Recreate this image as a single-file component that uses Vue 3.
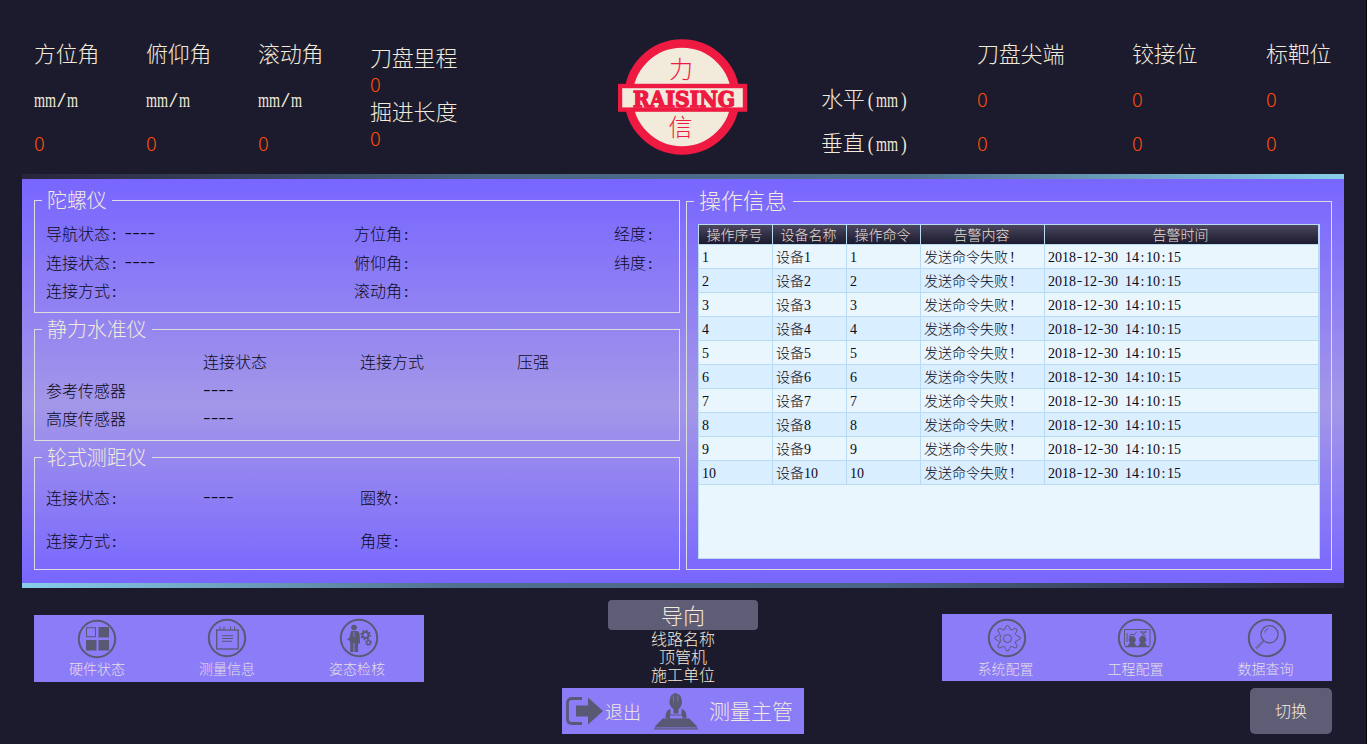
<script setup>
const angles = ['方位角', '俯仰角', '滚动角']
const positions = ['刀盘尖端', '铰接位', '标靶位']
const axes = ['水平', '垂直']
const columns = ['操作序号', '设备名称', '操作命令', '告警内容', '告警时间']
const stamp = '2018-12-30 14:10:15'.split(/([-: ])/)
const rows = Array.from({ length: 10 }, (_, i) => i + 1)
const sepClass = (s) => (s === '-' ? 'sep dash' : s === ':' || s === ' ' ? 'sep' : '')
</script>

<template>
  <div class="screen">
    <header class="top">
      <div class="angles">
        <div v-for="a in angles" :key="a" class="angle">
          <div class="cap">{{ a }}</div>
          <div class="unit"><span class="narrow">mm<i>/</i>m</span></div>
          <div class="val">0</div>
        </div>
      </div>
      <div class="mileage">
        <div class="cap">刀盘里程</div>
        <div class="val">0</div>
        <div class="cap">掘进长度</div>
        <div class="val">0</div>
      </div>
      <svg class="logo" width="130" height="118" viewBox="0 0 130 118">
        <circle cx="64" cy="59" r="53.5" fill="#f2eadb" stroke="#ee1a41" stroke-width="8.5" />
        <rect x="2" y="48" width="125" height="23.600" fill="#f2eadb" stroke="#ee1a41" stroke-width="4.4" />
        <text class="hz" x="63" y="40" text-anchor="middle">力</text>
        <text class="brand" x="15" y="68.500" textLength="102" lengthAdjust="spacingAndGlyphs">RAISING</text>
        <text class="hz" x="62.5" y="98" text-anchor="middle">信</text>
      </svg>
      <div class="offsets">
        <span></span>
        <span v-for="p in positions" :key="p" class="cap">{{ p }}</span>
        <template v-for="x in axes" :key="x">
          <span class="cap">{{ x }}<span class="narrow"><b>(</b>mm<b>)</b></span></span>
          <span v-for="p in positions" :key="p" class="val">0</span>
        </template>
      </div>
    </header>

    <div class="strip"></div>
    <main class="body">
      <div class="left">
        <fieldset class="gyro">
          <legend>陀螺仪</legend>
          <div class="g3">
            <span>导航状态<u>:</u><em class="first">----</em></span><span>方位角<u>:</u></span><span>经度<u>:</u></span>
            <span>连接状态<u>:</u><em class="first">----</em></span><span>俯仰角<u>:</u></span><span>纬度<u>:</u></span>
            <span>连接方式<u>:</u></span><span>滚动角<u>:</u></span><span></span>
          </div>
        </fieldset>
        <fieldset class="level">
          <legend>静力水准仪</legend>
          <div class="g4">
            <span></span><span>连接状态</span><span>连接方式</span><span>压强</span>
            <span>参考传感器</span><span><em>----</em></span><span></span><span></span>
            <span>高度传感器</span><span><em>----</em></span><span></span><span></span>
          </div>
        </fieldset>
        <fieldset class="wheel">
          <legend>轮式测距仪</legend>
          <div class="g4">
            <span>连接状态<u>:</u></span><span><em>----</em></span><span>圈数<u>:</u></span><span></span>
            <span>连接方式<u>:</u></span><span></span><span>角度<u>:</u></span><span></span>
          </div>
        </fieldset>
      </div>
      <fieldset class="info">
        <legend>操作信息</legend>
        <div class="table">
          <div class="tr head"><span v-for="c in columns" :key="c">{{ c }}</span></div>
          <div v-for="n in rows" :key="n" class="tr" :class="{ even: n % 2 === 0 }">
            <span>{{ n }}</span>
            <span>设备{{ n }}</span>
            <span>{{ n }}</span>
            <span>发送命令失败<s>!</s></span>
            <span class="time"><span v-for="(s, i) in stamp" :key="i" :class="sepClass(s)">{{ s }}</span></span>
          </div>
        </div>
      </fieldset>
    </main>
    <div class="strip rev"></div>

    <footer class="bottom">
      <nav class="panel pl">
        <div class="item low">
          <svg width="40" height="40" viewBox="0 0 40 40">
            <circle cx="20" cy="20" r="18.2" />
            <rect x="9.5" y="8.7" width="9" height="9" stroke-width="1" />
            <path class="f" d="M21.500 8h10.500v10.500h-10.500zM9 21h10.500v10.500H9zM21.500 21h10.500v10.500h-10.500z" />
          </svg>
          <span>硬件状态</span>
        </div>
        <div class="item">
          <svg width="40" height="40" viewBox="0 0 40 40">
            <circle cx="20" cy="20" r="18.200" />
            <rect x="9.700" y="12" width="21.500" height="19" stroke-width="1.300" />
            <path d="M13 8.500v3M17 8.500v3M23.500 8.500v3M27.500 8.500v3M15 17.700h11M15 20.500h11M15 23.300h10" stroke-width="1" />
          </svg>
          <span>测量信息</span>
        </div>
        <div class="item shift">
          <svg width="40" height="40" viewBox="0 0 40 40">
            <circle cx="20" cy="20" r="18.200" />
            <circle class="f" cx="15" cy="9.500" r="2.800" />
            <path class="f" d="M12 13h6q2.300.2 2.600 3l.5 9.500h-2V34h-3.600v-9h-1v9h-3.300V24.500L10 22H8.500v-1.600h1.700z" />
            <path d="M15 14v5" stroke="#8b7cf8" stroke-width=".8" />
            <circle cx="26.500" cy="17" r="3" stroke-width="1.900" />
            <circle cx="26.500" cy="17" r="4.600" stroke-width="1.500" stroke-dasharray="1.700 1.910" />
            <circle cx="29.500" cy="24.500" r="1.900" stroke-width="1.300" />
            <circle cx="29.500" cy="24.500" r="3.100" stroke-width="1" stroke-dasharray="1.200 1.230" />
          </svg>
          <span>姿态检核</span>
        </div>
      </nav>

      <section class="center">
        <div class="guide">导向</div>
        <div class="line">线路名称</div>
        <div class="line">顶管机</div>
        <div class="line">施工单位</div>
        <div class="user">
          <svg class="exit" width="38" height="28" viewBox="0 0 38 28">
            <path d="M16 1.500H6Q1.500 1.500 1.500 6v16q0 4.500 4.500 4.500h10" fill="none" stroke="#5a5974" stroke-width="2.800" />
            <path d="M10 8.500h12V.500L37 14 22 27.500v-8H10z" fill="#5a5974" />
          </svg>
          <span class="quit">退出</span>
          <svg class="man" width="46" height="38" viewBox="0 0 46 38">
            <g fill="#5a5974">
              <path d="M16.500 12Q16.500 2.500 20.500 2l2-1.200 2 1.200q4.500.5 4.500 10l-.8 1.500Q27 16.500 25.500 17v4.500h-5V17q-2-.5-3.200-3.500z" />
              <path d="M12.500 25.500q0-6.500 3.500-8l1.500-.5v5.500h11V17l1.500.5q3.500 1.500 3.500 8v1h-3.500l-1-2.500h-11l-1 2.500h-4.500z" />
              <path d="M9.500 26.500h27L45 35.500H1zM1 36.300h44v1.200H1z" />
            </g>
            <path d="M20.500 3.500v6M24.800 3.500v6" stroke="#8b7cf8" stroke-width=".6" />
            <path d="M17 23.500h12v2.200H17z" fill="#8b7cf8" />
          </svg>
          <span class="role">测量主管</span>
        </div>
      </section>

      <div class="rightcol">
        <nav class="panel">
          <div class="item">
            <svg width="40" height="40" viewBox="0 0 40 40">
              <circle cx="20" cy="20" r="18.200" />
              <circle cx="20.500" cy="20.500" r="4" stroke-width="1" />
              <path stroke-width="1" d="M18.500 10q.3-2.500 2-2.500t2 2.500q.2 1.200 1.500 1.700t2.400-.5q2-1.500 3.200-.3t-.4 3.200q-1 1.200-.5 2.400t1.800 1.500q2.800.3 2.800 2t-2.800 2.300q-1.300.3-1.800 1.500t.5 2.500q1.600 2 .4 3.200t-3.200-.4q-1.200-.9-2.400-.4t-1.500 1.800q-.3 2.500-2 2.500t-2-2.500q-.3-1.300-1.500-1.800t-2.400.4q-2 1.600-3.200.4t.4-3.200q1-1.300.5-2.500t-1.800-1.500q-2.800-.6-2.800-2.300t2.800-2q1.300-.3 1.800-1.500t-.5-2.400q-1.600-2-.4-3.200t3.200.3q1.200 1 2.400.5t1.500-1.700z" />
              <path stroke-width=".9" d="M14 16.500q-2 3.500 0 8" />
            </svg>
            <span>系统配置</span>
          </div>
          <div class="item">
            <svg width="40" height="40" viewBox="0 0 40 40">
              <circle cx="20" cy="20" r="18.200" />
              <path stroke-width="1" d="M7.500 27.500V11.500h25.500v16M10 15v9M12 19l2-3 3 1 3-3.500M24.500 13.500l4 5M28.500 13.500l-4 5M23 14h7" />
              <path class="f" d="M8 27.800h24.500v1.500H8zM11 28.500q.3-3 2.200-3.800a3.600 3.600 0 1 1 4 0q1.300.8 1.800 3.800zM21.500 28.500q.3-3 2.200-3.800a3.600 3.600 0 1 1 4 0q1.600.8 2 3.800z" />
            </svg>
            <span>工程配置</span>
          </div>
          <div class="item">
            <svg width="40" height="40" viewBox="0 0 40 40">
              <circle cx="20" cy="20" r="18.200" />
              <circle cx="22.500" cy="16.300" r="8.600" stroke-width="1.200" />
              <path stroke-width="1" d="M16.500 22L9 29.500M17.300 23L10 30.500M9 29.500l1 1M17.500 14.500q1-3 3.500-3.800" />
            </svg>
            <span>数据查询</span>
          </div>
        </nav>
        <div class="switch">切换</div>
      </div>
    </footer>
  </div>
</template>

<style>
body { background: #1c1a2d; overflow: hidden; }
</style>

<style scoped>
* { box-sizing: border-box; }
.screen {
  width: 1367px; height: 744px; background: #1c1a2d; border-right: 1px solid #050409;
  font-family: "Liberation Serif", "Noto Sans CJK SC", sans-serif;
  font-weight: 300; color: #f2eadb; font-size: 16px;
}
i, em, b, u, s { font-style: normal; font-weight: inherit; text-decoration: none; }

.top { height: 174px; display: flex; align-items: flex-start; padding-left: 34px; font-size: 22px; white-space: nowrap; }
.cap { letter-spacing: -.2px; }
.angles { display: flex; padding-top: 33px; }
.angle { width: 112px; line-height: 44.500px; }
.val { color: #fc4c0c; font: 300 20px/42px "Noto Sans CJK SC", sans-serif; }
.narrow { display: inline-block; font-size: 20px; letter-spacing: 0; transform: scaleX(.71); transform-origin: 0 50%; width: 44px; }
.narrow i { display: inline-block; width: 15.500px; text-align: center; transform: scaleX(2.100); }
.narrow b { display: inline-block; width: 15.500px; text-align: center; transform: scaleX(1.200); }
.mileage { width: 248px; padding: 45px 0 0; line-height: 27px; }
.mileage > div { height: 27px; }
.mileage .val { line-height: 24px; }
.logo { margin-top: 38px; flex: none; width: 130px; }
.hz { font: 300 24px "Noto Sans CJK SC", sans-serif; fill: #ee1a41; }
.brand { font: bold 22.500px "DejaVu Serif", serif; fill: #ee1a41; stroke: #ee1a41; stroke-width: 1.500; }
.offsets {
  margin-left: 73px; padding-top: 33px; display: grid;
  grid-template-columns: 156px 155px 134px 90px; grid-auto-rows: 44.500px; line-height: 44.500px;
}

.strip { height: 5px; width: 1322px; margin-left: 22px; background: linear-gradient(90deg, #28253b, #4b6685 36%, #50708d 67%, #87ceeb); }
.rev { background: linear-gradient(270deg, #28253b, #4b6685 36%, #50708d 67%, #87ceeb); }
.body {
  width: 1322px; height: 404px; margin-left: 22px; padding: 11px 12px 0; display: flex; gap: 6px;
  background: linear-gradient(#7866ff, #a397e8 56%, #7866ff);
}
.left { width: 646px; display: flex; flex-direction: column; gap: 6px; }
fieldset { margin: 0; padding: 0 0 0 11px; border: 1px solid #dfdcdf; min-width: 0; }
legend { padding: 0 5px; margin-left: -4px; font-size: 20px; line-height: 22px; height: 20px; letter-spacing: -.1px; color: #f2eadb; white-space: nowrap; }
.gyro { height: 123px; }
.level { height: 122px; }
.wheel { height: 123px; }
.g3, .g4 { display: grid; color: #0b0a18; white-space: nowrap; }
.g3 { grid-template-columns: 308px 260px 60px; grid-auto-rows: 28.500px; line-height: 28.500px; padding-top: 11px; }
.g4 { grid-template-columns: 157px 157px 157px 100px; grid-auto-rows: 28.500px; line-height: 28.500px; padding-top: 10px; }
.wheel .g4 { grid-auto-rows: 43px; line-height: 43px; }
em { font: 300 23px/0 "Noto Sans CJK SC", sans-serif; }
em.first { margin-left: 8px; }
u { margin-left: 2px; }

.info { width: 646px; height: 380px; }
.info legend { font-size: 22px; line-height: 24px; height: 22px; padding-right: 6px; }
.table { width: 622px; height: 335px; margin-top: 12px; border: 1px solid #b9dcee; background: #e9f6fe; color: #0b0a18; font-size: 14px; }
.tr { display: grid; grid-template-columns: 74px 74px 74px 124px 274px; height: 24px; line-height: 25px; white-space: nowrap; }
.tr > span { height: 24px; border-right: 1px solid #b8daf2; border-bottom: 1px solid #b8daf2; padding-left: 3px; }
.tr.even { background: #d9eeff; }
.head { height: 20px; line-height: 21px; }
.tr.head > span { height: 20px; text-align: center; padding: 0 2px 0 0; color: #e6dfd2; background: linear-gradient(#4a475f, #1c1a2d); }
s { margin-left: 2px; }
.sep { display: inline-block; width: 7px; text-align: center; white-space: pre; }
.dash { font: 300 18px/0 "Noto Sans CJK SC", sans-serif; }

.bottom { display: flex; justify-content: space-between; padding: 0 34px; height: 156px; }
.panel { display: flex; width: 390px; height: 67px; background: #8b7cf8; }
.pl { margin-top: 27px; }
.item { flex: 1; display: flex; flex-direction: column; align-items: center; padding-right: 4px; padding-top: 3px; font-size: 14px; line-height: 24px; color: #e6dfe4; }
.item svg { flex: none; fill: none; stroke: #5a5974; stroke-width: 2; }
.item .f { fill: #5a5974; stroke: none; }
.low svg { position: relative; top: 1px; }
.shift svg { position: relative; left: 2px; }
.center { width: 242px; padding-top: 12px; display: flex; flex-direction: column; align-items: center; line-height: 20px; }
.line { height: 18px; }
.guide { width: 150px; height: 30px; line-height: 33px; border-radius: 4px; background: #5f5d76; text-align: center; font-size: 22px; }
.user { display: flex; align-items: center; width: 242px; height: 46px; margin-top: 4px; background: #8b7cf8; white-space: nowrap; }
.exit { margin-left: 4px; flex: none; }
.quit { font-size: 18px; margin-left: 1px; padding-top: 3px; }
.man { margin-left: 12px; flex: none; }
.role { font-size: 21px; margin-left: 10px; padding-top: 2px; }
.rightcol { width: 390px; padding-top: 26px; display: flex; flex-direction: column; align-items: flex-end; gap: 7px; }
.rightcol .item { padding-right: 3px; padding-top: 3.500px; }
.rightcol .item svg { margin-left: 2px; }
.switch { width: 82px; height: 46px; line-height: 48px; border-radius: 5px; background: #5f5d76; text-align: center; }
</style>
